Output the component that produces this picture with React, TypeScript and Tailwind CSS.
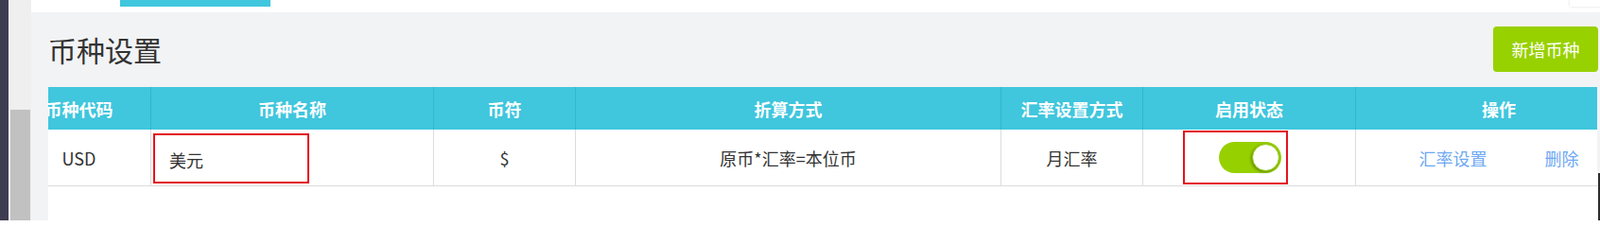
const font = { fontFamily: '"Noto Sans CJK SC", "Noto Sans", sans-serif' };

const headers = ["币种代码", "币种名称", "币符", "折算方式", "汇率设置方式", "启用状态", "操作"];
const grid = "grid grid-cols-[152px_299px_150px_450px_150px_225px_302px] w-[1728px]";

const Toggle = () => (
  <div className="flex h-[33px] w-[66px] items-center justify-end rounded-full bg-[#97d000] pr-[2px]">
    <div className="h-[29px] w-[29px] rounded-full border border-[#8cc400] bg-white shadow-[-1px_1px_3px_rgba(0,0,0,0.35)]" />
  </div>
);

const App = () => {
  return (
    <div className="flex h-[233px] w-[1692px] overflow-hidden bg-[#f2f3f5] text-[#333]" style={font}>
      {/* left rail */}
      <div className="h-full w-[9px] shrink-0 bg-[#3e3c51]" />
      <div className="flex h-full w-[24px] shrink-0 flex-col bg-[#efefef] pl-[2px] pr-[1px] pt-[116px]">
        <div className="flex-1 bg-[#c1c1c1]" />
      </div>

      <main className="flex h-full min-w-0 flex-1 flex-col">
        <div className="relative h-[13px] shrink-0 bg-white pl-[94px]">
          <div className="h-[7px] w-[159px] bg-[#40c6dd]" />
          <div className="absolute right-0 top-0 h-[7px] w-[32px] bg-white shadow-[0_0_3px_rgba(0,0,0,0.15)]" />
        </div>

        <div className="relative flex min-w-0 flex-1 flex-col pl-[18px] pr-[3px] pt-[15px]">
          <div className="flex h-[48px] shrink-0 items-center justify-between">
            <h1 className="text-[30px] font-normal leading-[48px] text-[#333]">币种设置</h1>
            <button className="mr-[-1px] h-[48px] w-[111px] shrink-0 rounded-[4px] bg-[#98d100] text-[18px] leading-none text-white">
              新增币种
            </button>
          </div>

          <div className="mt-[16px] min-w-0 flex-1 overflow-hidden bg-white">
            <div className={`${grid} ml-[-43px] h-[45px] bg-[#40c6dd] text-[18px] font-bold text-white`}>
              {headers.map((h, i) => (
                <div
                  key={h}
                  className={`flex items-center justify-center leading-none ${i < headers.length - 1 ? "border-r border-[#36b5cc]" : ""}`}
                >
                  {h}
                </div>
              ))}
            </div>

            <div className={`${grid} ml-[-43px] h-[60px] border-b border-[#dcdcdc] text-[18px] leading-none text-[#333]`}>
              <div className="flex items-center justify-center border-r border-[#dcdcdc]">USD</div>
              <div className="relative flex items-center border-r border-[#dcdcdc] pl-[19px] pt-[4px]">
                美元
                <div className="absolute left-[2px] top-[4px] h-[53px] w-[165px] border-2 border-[#e3131d]" />
              </div>
              <div className="flex items-center justify-center border-r border-[#dcdcdc]">$</div>
              <div className="flex items-center justify-center border-r border-[#dcdcdc]">原币*汇率=本位币</div>
              <div className="flex items-center justify-center border-r border-[#dcdcdc]">月汇率</div>
              <div className="relative flex items-center justify-center border-r border-[#dcdcdc] pl-[1px]">
                <Toggle />
                <div className="absolute left-[42px] top-[1px] h-[57px] w-[111px] border-2 border-[#e3131d]" />
              </div>
              <div className="flex items-center justify-center gap-[61px] text-[#6ea8f2]">
                <span>汇率设置</span>
                <span>删除</span>
              </div>
            </div>
          </div>

          <div className="absolute bottom-0 right-0 h-[50px] w-[2px] bg-[#2d2d2d]" />
        </div>
      </main>
    </div>
  );
};

export default App;
